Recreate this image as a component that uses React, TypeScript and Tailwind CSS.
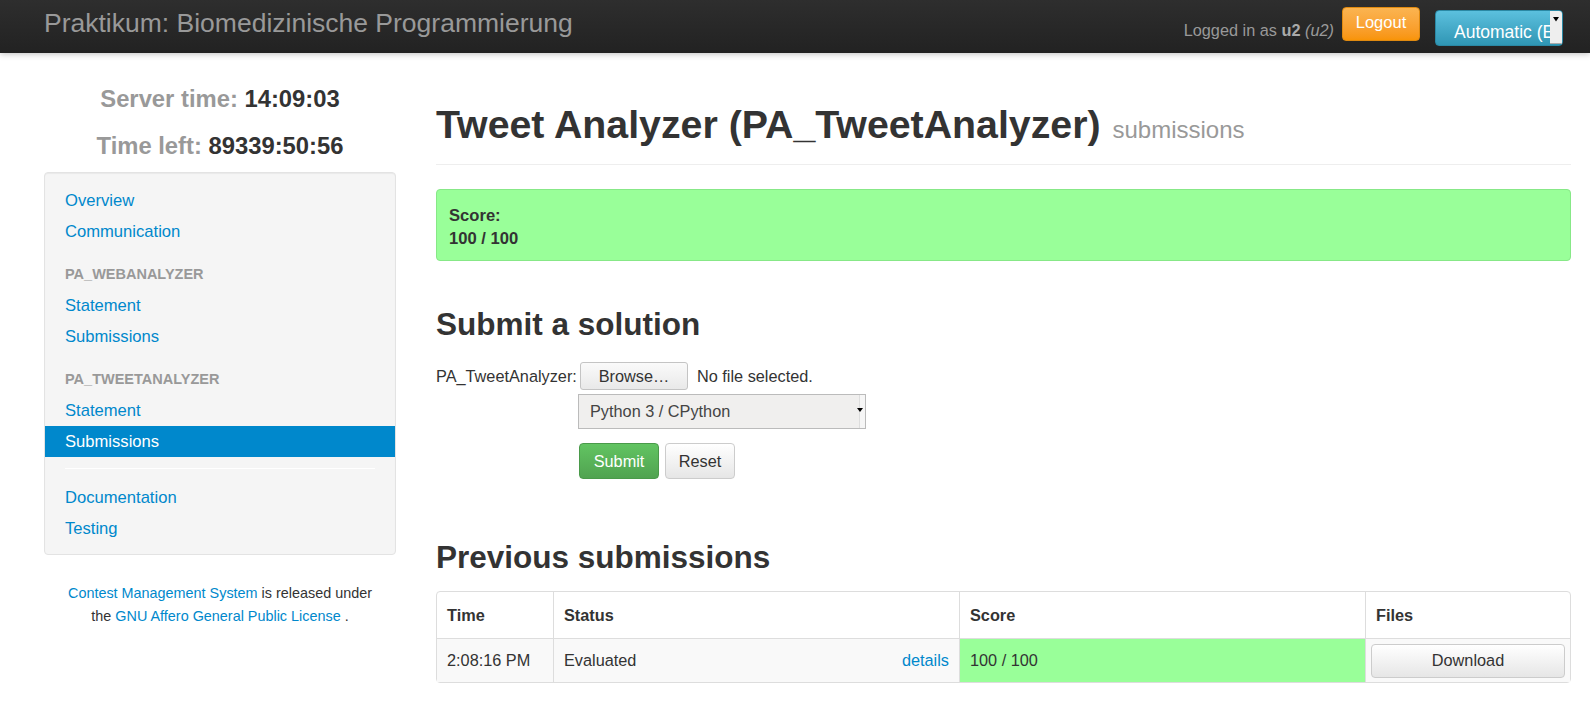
import React from "react";

const FONT = { fontFamily: '"Liberation Sans", Arial, sans-serif' };

function NavLink({ label, active }: { label: string; active?: boolean }) {
  return (
    <a
      className={`block px-5 h-[31px] leading-[31px] text-[16.6px] ${
        active ? "bg-[#0088cc] text-white" : "text-[#0088cc]"
      }`}
    >
      {label}
    </a>
  );
}

function NavHeader({ label }: { label: string }) {
  return (
    <div className="px-5 pt-[12px] h-[43px] leading-[30px] text-[14.5px] font-bold uppercase text-[#999]">
      {label}
    </div>
  );
}

export default function App() {
  return (
    <div style={FONT} className="min-h-[724px] bg-white text-[#333]">
      {/* Navbar */}
      <div className="h-[53px] bg-gradient-to-b from-[#2e2e2e] to-[#222] shadow-[0_1px_6px_rgba(0,0,0,0.25)] flex items-center">
        <div className="pl-[44px] text-[26.5px] text-[#999] leading-none pb-[6px]">
          Praktikum: Biomedizinische Programmierung
        </div>
        <div className="ml-auto flex items-start h-full pt-[7px] pr-[27px]">
          <span className="text-[16.3px] text-[#999] mt-[11px] mr-[8px]">
            Logged in as <b className="text-[#aaa]">u2</b> <i>(u2)</i>
          </span>
          <button className="h-[34px] w-[78px] rounded-[4px] bg-gradient-to-b from-[#fbb450] to-[#f89406] border border-[#e08a10] text-white text-[16.5px] pb-[3px]">
            Logout
          </button>
          <div className="ml-[15px] mt-[3px] h-[36px] w-[128px] rounded-[4px] bg-gradient-to-b from-[#5bc0de] to-[#2f96b4] border border-[#2a88a4] flex overflow-hidden">
            <span className="flex-1 text-white text-[17.5px] leading-[35px] pt-[4px] pl-[18px] whitespace-nowrap overflow-hidden">
              Automatic (En
            </span>
            <span className="w-[12px] h-[33px] bg-[#eee] border-b border-[#aaa] flex items-start justify-center pt-[6px]">
              <svg width="6" height="5" viewBox="0 0 6 5">
                <path d="M0 0 L6 0 L3 4.5 Z" fill="#000" />
              </svg>
            </span>
          </div>
        </div>
      </div>

      <div className="flex pl-[44px] pr-[19px] pt-[18px] gap-[40px]">
        {/* Sidebar */}
        <div className="w-[352px] shrink-0">
          <div className="text-center text-[23.8px] font-bold leading-[47px] mt-[4px]">
            <div>
              <span className="text-[#999]">Server time:</span> 14:09:03
            </div>
            <div>
              <span className="text-[#999]">Time left:</span> 89339:50:56
            </div>
          </div>
          <div className="mt-[3px] bg-[#f5f5f5] border border-[#e3e3e3] rounded-[4px] pt-[12px] pb-[10px] shadow-[inset_0_1px_1px_rgba(0,0,0,0.05)]">
            <NavLink label="Overview" />
            <NavLink label="Communication" />
            <NavHeader label="PA_WebAnalyzer" />
            <NavLink label="Statement" />
            <NavLink label="Submissions" />
            <NavHeader label="PA_TweetAnalyzer" />
            <NavLink label="Statement" />
            <NavLink label="Submissions" active />
            <div className="mx-5 mt-[11px] mb-[13px] h-[1px] bg-[#e5e5e5] border-b border-white" />
            <NavLink label="Documentation" />
            <NavLink label="Testing" />
          </div>
          <div className="mt-[27px] text-center text-[14.4px] leading-[23px] text-[#333]">
            <a className="text-[#0088cc]">Contest Management System</a> is released under
            <br />
            the <a className="text-[#0088cc]">GNU Affero General Public License</a> .
          </div>
        </div>

        {/* Main */}
        <div className="flex-1">
          <div className="border-b border-[#eee] pb-[6px] mt-[25px]">
            <h1 className="text-[39.3px] font-bold leading-[56px]">
              Tweet Analyzer (PA_TweetAnalyzer){" "}
              <small className="text-[24px] font-normal text-[#999] ml-[1px]">submissions</small>
            </h1>
          </div>

          <div className="mt-[24px] h-[72px] bg-[#99ff99] border border-[#87e887] rounded-[4px] px-[12px] pt-[14px] text-[16.6px] font-bold leading-[23px]">
            <div>Score:</div>
            <div>100 / 100</div>
          </div>

          <h2 className="mt-[43px] text-[31.5px] font-bold leading-[40px]">Submit a solution</h2>

          <div className="mt-[18px] text-[16.3px]">
            <div className="flex items-center h-[28px]">
              <span className="w-[144px]">PA_TweetAnalyzer:</span>
              <button className="h-[28px] w-[108px] border border-[#c4c4c4] rounded-[3px] bg-gradient-to-b from-[#fafafa] to-[#e9e9e9] text-[16.3px] text-[#333]">
                Browse…
              </button>
              <span className="ml-[9px]">No file selected.</span>
            </div>
            <div className="ml-[142px] mt-[4px] w-[288px] h-[35px] border border-[#bbb] bg-[#f0efee] flex items-center">
              <span className="pl-[11px] text-[#444]">Python 3 / CPython</span>
              <span className="ml-auto w-[6px] h-full border-l border-[#ddd] bg-[#f6f6f6] flex items-center">
                <svg width="6" height="5" viewBox="0 0 6 5" className="-ml-[3px] mb-[3px]">
                  <path d="M0 0 L6 0 L3 4 Z" fill="#000" />
                </svg>
              </span>
            </div>
            <div className="ml-[143px] mt-[14px] flex gap-[6px]">
              <button className="h-[36px] w-[80px] rounded-[4px] bg-gradient-to-b from-[#62c462] to-[#51a351] border border-[#4a9a4a] text-white text-[16.3px]">
                Submit
              </button>
              <button className="h-[36px] w-[70px] rounded-[4px] bg-gradient-to-b from-white to-[#e6e6e6] border border-[#ccc] text-[#333] text-[16.3px]">
                Reset
              </button>
            </div>
          </div>

          <h2 className="mt-[58px] text-[31.5px] font-bold leading-[40px]">Previous submissions</h2>

          <table className="mt-[14px] w-full border-separate border-spacing-0 border border-[#ddd] rounded-[4px] text-[16.3px]">
            <thead>
              <tr className="h-[46px] text-left">
                <th className="w-[116px] px-[10px] font-bold">Time</th>
                <th className="w-[406px] px-[10px] font-bold border-l border-[#ddd]">Status</th>
                <th className="w-[406px] px-[10px] font-bold border-l border-[#ddd]">Score</th>
                <th className="px-[10px] font-bold border-l border-[#ddd]">Files</th>
              </tr>
            </thead>
            <tbody>
              <tr className="h-[44px] bg-[#f9f9f9]">
                <td className="px-[10px] border-t border-[#ddd]">2:08:16 PM</td>
                <td className="px-[10px] border-t border-l border-[#ddd]">
                  <div className="flex">
                    <span>Evaluated</span>
                    <a className="ml-auto text-[#0088cc]">details</a>
                  </div>
                </td>
                <td className="px-[10px] border-t border-l border-[#ddd] bg-[#99ff99]">100 / 100</td>
                <td className="px-[5px] border-t border-l border-[#ddd]">
                  <button className="w-full h-[34px] rounded-[4px] bg-gradient-to-b from-white to-[#e6e6e6] border border-[#ccc] text-[#333] text-[16.3px]">
                    Download
                  </button>
                </td>
              </tr>
            </tbody>
          </table>
        </div>
      </div>
    </div>
  );
}
